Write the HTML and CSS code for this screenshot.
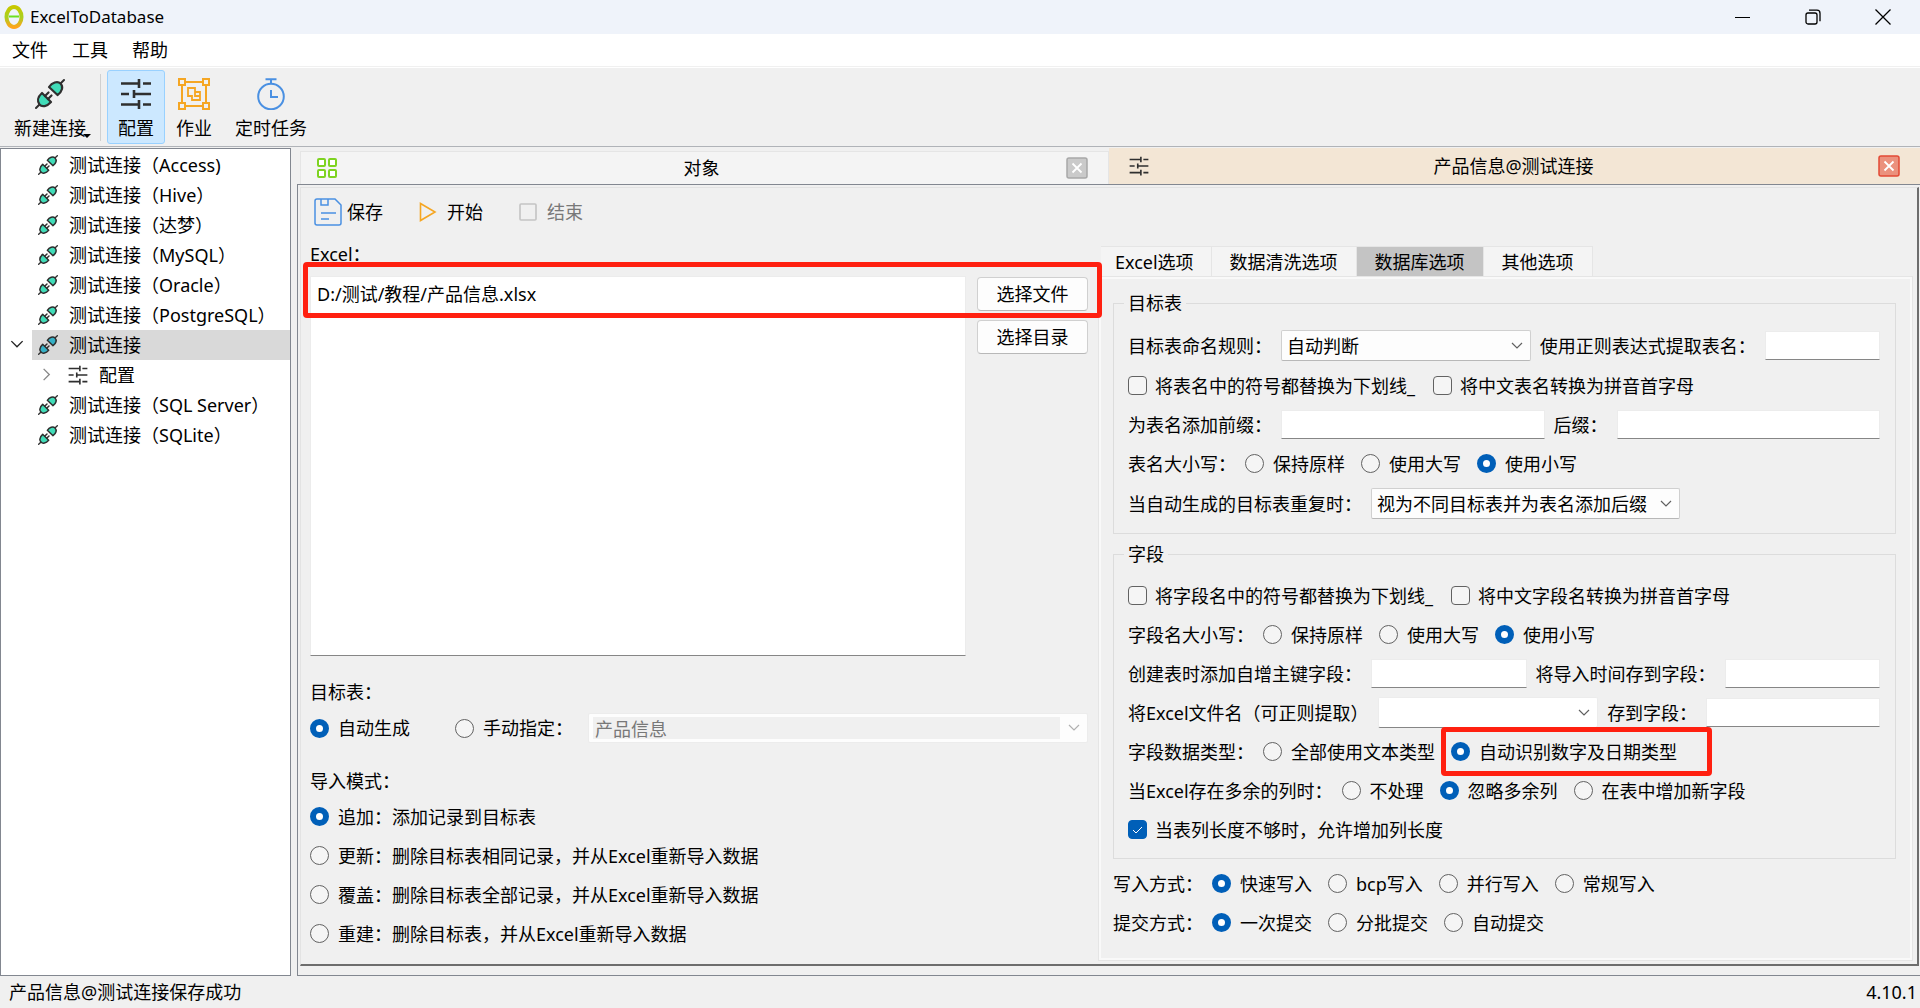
FILE: index.html
```html
<!DOCTYPE html>
<html lang="zh-CN">
<head>
<meta charset="utf-8">
<title>ExcelToDatabase</title>
<link rel="stylesheet" href="styles.css">
</head>
<body>
<svg class="sprite" aria-hidden="true">
  <symbol id="i-plug" viewBox="0 0 30 30">
    <path d="M29 1l-4 4M1 29l4-4" fill="none" stroke="#2f2f2f" stroke-width="2" stroke-linecap="round"/>
    <path d="M14 8C17 3.500 22.500 1.500 25.500 4.500S27.500 12.500 22.500 16Z" fill="currentColor" stroke="#2f2f2f" stroke-width="2.200" stroke-linejoin="round"/>
    <path d="M7 14L16 23C12 27.500 7 28.500 4.500 25.500S2.500 18 7 14Z" fill="currentColor" stroke="#2f2f2f" stroke-width="2.200" stroke-linejoin="round"/>
    <path d="M10 17l3.500-3.500M13 20l3.500-3.500" fill="none" stroke="#2f2f2f" stroke-width="2.200" stroke-linecap="round"/>
  </symbol>
  <symbol id="i-sliders" viewBox="0 0 32 32">
    <path d="M1 5.500h18M19 1v9M23 5.500h8M1 16h8M14 12v8M14 16h17M1 26.500h18M19 22v9M23 26.500h8" fill="none" stroke="#2f2f2f" stroke-width="2.600"/>
  </symbol>
  <symbol id="i-close" viewBox="0 0 22 22">
    <rect x="1" y="1" width="20" height="20" rx="2" fill="currentColor" fill-opacity=".55" stroke="currentColor" stroke-width="1.500"/>
    <path d="M6.500 6.500l9 9M15.500 6.500l-9 9" stroke="#fff" stroke-width="1.800"/>
  </symbol>
  <symbol id="i-chevron" viewBox="0 0 12 8"><path d="M1 1l5 5 5-5" fill="none" stroke="currentColor" stroke-width="1.200"/></symbol>
</svg>

<header class="titlebar">
  <svg class="logo" viewBox="0 0 20 26" aria-hidden="true">
    <defs><linearGradient id="lg" x1="0" y1="0" x2="0" y2="1"><stop offset="0" stop-color="#c8c800"/><stop offset=".5" stop-color="#a8d020"/><stop offset="1" stop-color="#ffa51c"/></linearGradient></defs>
    <ellipse cx="10" cy="13" rx="7.500" ry="10" fill="none" stroke="url(#lg)" stroke-width="4"/>
    <path d="M5 12.500h10" stroke="#6be020" stroke-width="2"/>
  </svg>
  <span class="app-name">ExcelToDatabase</span>
  <div class="window-buttons">
    <button aria-label="最小化"><svg viewBox="0 0 16 16"><path d="M0 8.500h15" stroke="#000"/></svg></button>
    <button aria-label="还原"><svg viewBox="0 0 16 16"><g fill="none" stroke="#000" stroke-width="1.300"><rect x="1" y="4" width="11" height="11" rx="2"/><path d="M4 1.200h8q3 0 3 3v8"/></g></svg></button>
    <button aria-label="关闭"><svg viewBox="0 0 16 16"><path d="M.5.5l15 15M15.500.5l-15 15" stroke="#000" stroke-width="1.300"/></svg></button>
  </div>
</header>

<nav class="menubar">
  <button>文件</button><button>工具</button><button>帮助</button>
</nav>

<div class="toolbar">
  <button class="tool"><svg class="tool-plug" aria-hidden="true"><use href="#i-plug"/></svg><span>新建连接</span><i class="drop"></i></button>
  <div class="separator"></div>
  <button class="tool active"><svg aria-hidden="true"><use href="#i-sliders"/></svg><span>配置</span></button>
  <button class="tool"><svg viewBox="0 0 32 32" fill="none" stroke="#f5a623" stroke-width="2" aria-hidden="true"><rect x="1" y="1" width="6" height="6"/><rect x="25" y="1" width="6" height="6"/><rect x="1" y="25" width="6" height="6"/><rect x="25" y="25" width="6" height="6"/><path d="M7 4h18M7 28h18M4 7v18M28 7v18"/><path d="M10 10h7v4h5v8h-8v-4h-4zM17 14v4h5" stroke-width="1.800"/></svg><span>作业</span></button>
  <button class="tool wide"><svg viewBox="0 0 32 32" fill="none" stroke="#4a90e2" stroke-width="2" aria-hidden="true"><circle cx="16" cy="18.500" r="12.800"/><path d="M10.500 1.200h11M16 1.200v4M16 12v7h7"/></svg><span>定时任务</span></button>
</div>

<main class="workspace">
  <aside class="tree">
    <ul>
      <li><svg><use href="#i-plug"/></svg>测试连接（Access)</li>
      <li><svg><use href="#i-plug"/></svg>测试连接（Hive）</li>
      <li><svg><use href="#i-plug"/></svg>测试连接（达梦）</li>
      <li><svg><use href="#i-plug"/></svg>测试连接（MySQL）</li>
      <li><svg><use href="#i-plug"/></svg>测试连接（Oracle）</li>
      <li><svg><use href="#i-plug"/></svg>测试连接（PostgreSQL）</li>
      <li class="selected"><svg class="arrow"><use href="#i-chevron"/></svg><svg><use href="#i-plug"/></svg>测试连接</li>
      <li class="child"><svg class="arrow closed"><use href="#i-chevron"/></svg><svg><use href="#i-sliders"/></svg>配置</li>
      <li><svg><use href="#i-plug"/></svg>测试连接（SQL Server）</li>
      <li><svg><use href="#i-plug"/></svg>测试连接（SQLite）</li>
    </ul>
  </aside>

  <section class="documents">
    <div class="doc-tabs">
      <div class="doc-tab">
        <svg viewBox="0 0 20 20" fill="#fff" stroke="#7ed321" stroke-width="2" aria-hidden="true"><rect x="1" y="1" width="7" height="7" rx="1"/><rect x="12" y="1" width="7" height="7" rx="1"/><rect x="1" y="12" width="7" height="7" rx="1"/><rect x="12" y="12" width="7" height="7" rx="1"/></svg>
        <span>对象</span>
        <button class="tab-close" aria-label="关闭"><svg><use href="#i-close"/></svg></button>
      </div>
      <div class="doc-tab current">
        <svg aria-hidden="true"><use href="#i-sliders"/></svg>
        <span>产品信息@测试连接</span>
        <button class="tab-close" aria-label="关闭"><svg><use href="#i-close"/></svg></button>
      </div>
    </div>

    <div class="doc-frame">
    <form class="doc">
      <div class="actions">
        <button type="button"><svg class="save" viewBox="0 0 28 28" fill="none" stroke="#4a90e2" stroke-width="1.500" aria-hidden="true"><path d="M3 1h18l6 6v18q0 2-2 2H3q-2 0-2-2V3q0-2 2-2zM7 1v6h7V1M7 15h15M7 21h8"/></svg>保存</button>
        <button type="button"><svg class="play" viewBox="0 0 18 20" fill="none" stroke="#f5a623" stroke-width="1.600" aria-hidden="true"><path d="M1.500 1.500L16 10 1.500 18.500z"/></svg>开始</button>
        <button type="button" disabled><svg class="stop" viewBox="0 0 18 18" fill="none" stroke="#c4c4c4" stroke-width="1.600" aria-hidden="true"><rect x="1" y="1" width="16" height="16" rx="1"/></svg>结束</button>
      </div>

      <div class="columns">
        <div class="source">
          <label class="caption" for="files">Excel：</label>
          <div class="file-area">
            <textarea id="files" spellcheck="false">D:/测试/教程/产品信息.xlsx</textarea>
            <div class="file-buttons">
              <button type="button" class="push">选择文件</button>
              <button type="button" class="push">选择目录</button>
            </div>
            <div class="mark mark-file"></div>
          </div>
          <div class="caption target-caption">目标表：</div>
          <div class="target-row">
            <label class="choice"><input type="radio" name="target" checked>自动生成</label>
            <label class="choice"><input type="radio" name="target">手动指定：</label>
            <div class="combo disabled"><select disabled aria-label="目标表"><option>产品信息</option></select><svg><use href="#i-chevron"/></svg></div>
          </div>
          <div class="caption mode-caption">导入模式：</div>
          <div class="rows">
            <div class="row"><label class="choice"><input type="radio" name="mode" checked>追加：添加记录到目标表</label></div>
            <div class="row"><label class="choice"><input type="radio" name="mode">更新：删除目标表相同记录，并从Excel重新导入数据</label></div>
            <div class="row"><label class="choice"><input type="radio" name="mode">覆盖：删除目标表全部记录，并从Excel重新导入数据</label></div>
            <div class="row"><label class="choice"><input type="radio" name="mode">重建：删除目标表，并从Excel重新导入数据</label></div>
          </div>
        </div>

        <div class="options">
          <div class="option-tabs">
            <button type="button">Excel选项</button><button type="button">数据清洗选项</button><button type="button" class="current">数据库选项</button><button type="button">其他选项</button>
          </div>
          <div class="pane">
            <fieldset class="rows">
              <legend>目标表</legend>
              <div class="row tall">
                <label for="rule">目标表命名规则：</label>
                <div class="combo grow-rule"><select id="rule"><option>自动判断</option></select><svg><use href="#i-chevron"/></svg></div>
                <label for="regex">使用正则表达式提取表名：</label>
                <input type="text" id="regex" class="grow-regex">
              </div>
              <div class="row">
                <label class="choice check"><input type="checkbox">将表名中的符号都替换为下划线_</label>
                <label class="choice check"><input type="checkbox">将中文表名转换为拼音首字母</label>
              </div>
              <div class="row">
                <label for="prefix">为表名添加前缀：</label><input type="text" id="prefix">
                <label for="suffix">后缀：</label><input type="text" id="suffix">
              </div>
              <div class="row">
                <span>表名大小写：</span>
                <label class="choice"><input type="radio" name="tcase">保持原样</label>
                <label class="choice"><input type="radio" name="tcase">使用大写</label>
                <label class="choice"><input type="radio" name="tcase" checked>使用小写</label>
              </div>
              <div class="row tall">
                <label for="dup">当自动生成的目标表重复时：</label>
                <div class="combo"><select id="dup"><option>视为不同目标表并为表名添加后缀</option></select><svg><use href="#i-chevron"/></svg></div>
              </div>
            </fieldset>

            <fieldset class="rows">
              <legend>字段</legend>
              <div class="row">
                <label class="choice check"><input type="checkbox">将字段名中的符号都替换为下划线_</label>
                <label class="choice check"><input type="checkbox">将中文字段名转换为拼音首字母</label>
              </div>
              <div class="row">
                <span>字段名大小写：</span>
                <label class="choice"><input type="radio" name="fcase">保持原样</label>
                <label class="choice"><input type="radio" name="fcase">使用大写</label>
                <label class="choice"><input type="radio" name="fcase" checked>使用小写</label>
              </div>
              <div class="row">
                <label for="pk">创建表时添加自增主键字段：</label><input type="text" id="pk">
                <label for="time">将导入时间存到字段：</label><input type="text" id="time">
              </div>
              <div class="row">
                <label for="fname">将Excel文件名（可正则提取）</label>
                <div class="combo editable grow-name"><select id="fname"><option></option></select><svg><use href="#i-chevron"/></svg></div>
                <label for="fcol">存到字段：</label><input type="text" id="fcol" class="grow-col">
              </div>
              <div class="row">
                <span>字段数据类型：</span>
                <label class="choice"><input type="radio" name="dtype">全部使用文本类型</label>
                <label class="choice marked"><input type="radio" name="dtype" checked>自动识别数字及日期类型<i class="mark mark-type"></i></label>
              </div>
              <div class="row">
                <span>当Excel存在多余的列时：</span>
                <label class="choice"><input type="radio" name="extra">不处理</label>
                <label class="choice"><input type="radio" name="extra" checked>忽略多余列</label>
                <label class="choice"><input type="radio" name="extra">在表中增加新字段</label>
              </div>
              <div class="row">
                <label class="choice check"><input type="checkbox" checked>当表列长度不够时，允许增加列长度</label>
              </div>
            </fieldset>

            <div class="rows">
              <div class="row">
                <span>写入方式：</span>
                <label class="choice"><input type="radio" name="write" checked>快速写入</label>
                <label class="choice"><input type="radio" name="write">bcp写入</label>
                <label class="choice"><input type="radio" name="write">并行写入</label>
                <label class="choice"><input type="radio" name="write">常规写入</label>
              </div>
              <div class="row">
                <span>提交方式：</span>
                <label class="choice"><input type="radio" name="commit" checked>一次提交</label>
                <label class="choice"><input type="radio" name="commit">分批提交</label>
                <label class="choice"><input type="radio" name="commit">自动提交</label>
              </div>
            </div>
          </div>
        </div>
      </div>
    </form>
    </div>
  </section>
</main>

<footer class="statusbar"><span>产品信息@测试连接保存成功</span><span>4.10.1</span></footer>
</body>
</html>
```

FILE: styles.css
```css
* { box-sizing: border-box; }

body {
  margin: 0;
  min-height: 100vh;
  display: flex;
  flex-direction: column;
  background: #f0f0f0;
  color: #000;
  font: 18px/24px "Noto Sans", "Noto Sans CJK SC", sans-serif;
  white-space: nowrap;
}

button, input, select, textarea {
  margin: 0;
  padding: 0;
  border: 0;
  border-radius: 0;
  background: none;
  color: inherit;
  font: inherit;
}

.sprite { position: absolute; width: 0; height: 0; }

/* Window chrome */
.titlebar { display: flex; align-items: center; height: 34px; padding-left: 4px; background: #eff3fa; }
.logo { width: 20px; height: 26px; }
.app-name { margin-left: 6px; font-size: 17px; }
.window-buttons { display: flex; margin: 0 2px 0 auto; }
.window-buttons button { width: 70px; height: 34px; display: grid; place-items: center; }
.window-buttons svg { width: 16px; height: 16px; }

.menubar { display: flex; height: 33px; background: #fff; border-bottom: 1px solid #f0f0f0; }
.menubar button { width: 60px; }

.toolbar { display: flex; height: 80px; padding: 2px 0 2px 4px; border-top: 1px solid #fff; border-bottom: 1px solid #b0b3b8; }
.tool { position: relative; display: flex; flex-direction: column; align-items: center; min-width: 58px; padding: 7px 0 0; border: 1px solid transparent; border-radius: 3px; }
.tool svg { width: 32px; height: 32px; margin-bottom: 6px; }
.tool .tool-plug { width: 30px; height: 32px; }
.tool:first-child { padding: 7px 11px 0 9px; }
.tool.wide { padding: 7px 11px 0; }
.tool.active { background: #cce8ff; border-color: #99d1ff; }
.drop { position: absolute; right: 6px; bottom: 5px; border: 4px solid transparent; border-top-color: #000; border-bottom: 0; }
.separator { width: 1px; margin: 4px 6px 3px 2px; background: #d0d0d0; }
.tool-plug, .tree svg { color: #40dcb8; }

/* Workspace */
.workspace { flex: 1; display: flex; gap: 6px; padding-top: 1px; }

.tree { flex: 0 0 291px; background: #fff; border: 1px solid #828790; }
.tree ul { margin: 0; padding: 1px 0; list-style: none; }
.tree li { position: relative; display: flex; align-items: center; gap: 11px; height: 30px; margin-left: 31px; padding: 0 0 1px 6px; }
.tree svg { width: 20px; height: 20px; }
.tree .selected { background: #d9d9d9; }
.tree .selected svg { color: #35b0c5; }
.tree .arrow { position: absolute; left: -22px; width: 14px; height: 9px; }
.tree .selected .arrow { color: #222; }
.tree .child { padding-left: 36px; }
.tree .child .arrow { left: 8px; color: #888; transform: rotate(-90deg); }

.documents { flex: 1; min-width: 0; display: flex; flex-direction: column; }
.doc-tabs { display: flex; align-items: flex-end; padding-left: 3px; }
.doc-tab { flex: 1; display: flex; align-items: center; height: 33px; padding: 0 20px 1px 16px; background: #f4f4f4; border: 1px solid #e5e5e5; border-bottom: 0; }
.doc-tab span { flex: 1; text-align: center; }
.doc-tab > svg { width: 20px; height: 20px; }
.doc-tab.current { height: 36px; padding: 0 20px 1px; background: #f3e6d5; border: 0; }
.tab-close { width: 22px; height: 22px; color: #a8a8a8; }
.current .tab-close { color: #e34a35; }
.tab-close svg { display: block; width: 22px; height: 22px; }

.doc-frame { flex: 1; display: flex; padding: 2px 1px 9px 2px; border: 1px solid #828790; border-right: 0; }
.doc { flex: 1; min-width: 0; display: flex; flex-direction: column; padding: 0 4px 3px 9px; border: 1px solid #e3e3e3; border-right: 2px solid #6d6d6d; border-bottom: 2px solid #6d6d6d; }

.actions { display: flex; gap: 36px; height: 54px; padding: 0 0 6px 4px; align-items: center; }
.actions button { display: flex; align-items: center; gap: 5px; }
.actions button:nth-child(n+2) { gap: 10px; }
.actions button:disabled { color: #787878; }
.save { width: 28px; height: 28px; }
.play { width: 18px; height: 20px; }
.stop { width: 18px; height: 18px; }

.columns { flex: 1; display: grid; grid-template-columns: minmax(0, 778fr) minmax(0, 815fr); gap: 10px; }

/* Shared form parts */
.rows { display: flex; flex-direction: column; gap: 8px; }
.row { display: flex; align-items: center; gap: 9px; height: 31px; }
.row.tall { height: 33px; }
.choice { display: flex; align-items: center; gap: 9px; padding-right: 7px; }
.choice.check { gap: 8px; padding-right: 9px; }

input[type="radio"], input[type="checkbox"] { appearance: none; flex: none; width: 19px; height: 19px; border: 1px solid #626262; background: #f5f5f5; }
input[type="radio"] { border-radius: 50%; }
input[type="radio"]:checked { border: 6px solid #005fb8; background: #fff; }
input[type="checkbox"] { border-radius: 4px; }
input[type="checkbox"]:checked {
  border-color: #005fb8;
  background: #005fb8 url("data:image/svg+xml,%3Csvg xmlns='http://www.w3.org/2000/svg' viewBox='0 0 17 17'%3E%3Cpath d='M4 9l3 3 6-6' fill='none' stroke='white'/%3E%3C/svg%3E");
}

input[type="text"] { flex: 1 1 0; min-width: 0; height: 29px; padding: 0 5px; background: #fff; border: 1px solid #ececec; border-bottom-color: #868686; }

.combo { position: relative; display: flex; align-items: center; height: 31px; background: #fdfdfd; border: 1px solid #d0d0d0; border-bottom-color: #b8b8b8; border-radius: 2px; }
.combo select { appearance: none; width: 100%; height: 100%; padding: 0 32px 0 5px; }
.combo svg { position: absolute; right: 7px; width: 12px; height: 8px; color: #606060; pointer-events: none; }
.combo.editable { background: #fff; border-color: #ececec; border-bottom-color: #868686; }
.combo.disabled { flex: 1; padding: 3px 27px 3px 4px; height: 30px; border-color: #ececec; color: #787878; }
.combo.disabled select { padding: 0 2px; background: #f0f0f0; opacity: 1; }
.combo.disabled svg { color: #b0b0b0; }

.push { width: 111px; height: 34px; background: #fdfdfd; border: 1px solid #d0d0d0; border-bottom-color: #b8b8b8; border-radius: 4px; }

.mark { position: absolute; border: 5px solid #ff2010; border-radius: 4px; pointer-events: none; }

/* Source column */
.source { display: flex; flex-direction: column; padding-bottom: 12px; }
.file-area { position: relative; flex: 1; display: flex; gap: 11px; margin-top: 10px; }
.file-area textarea { flex: 1; min-width: 0; resize: none; padding: 5px 6px; background: #fff; border: 1px solid #ececec; border-bottom-color: #868686; outline: 0; }
.file-buttons { display: flex; flex-direction: column; gap: 9px; padding-top: 1px; }
.mark-file { left: -7px; right: -14px; top: -14px; height: 56px; }
.target-caption { margin-top: 24px; }
.target-row { display: flex; align-items: center; margin-top: 9px; }
.target-row .choice { padding-right: 45px; }
.target-row .choice + .choice { padding-right: 15px; }
.mode-caption { margin: 26px 0 8px; }

/* Options column */
.options { display: flex; flex-direction: column; padding-top: 4px; }
.option-tabs { display: flex; padding-left: 3px; }
.option-tabs button { height: 30px; padding: 0 18px; background: #f4f4f4; border: 1px solid #e5e5e5; border-width: 1px 1px 0 0; }
.option-tabs button:first-child { padding: 0 17px 0 14px; }
.option-tabs .current { background: #c4c4c4; }
.pane { flex: 1; padding: 14px 16px 0 14px; border: 1px solid #e5e5e5; outline: 2px solid #f9f9f9; outline-offset: -3px; }
.pane > .rows:last-child { margin-top: 9px; }

fieldset { min-width: 0; margin: 0 0 8px; padding: 14px 15px 13px 14px; border: 1px solid #dcdcdc; }
legend { margin-left: -4px; padding: 0 4px; }
.grow-rule { flex: 247 1 0; }
input.grow-regex { flex: 103 1 0; }
.grow-name { flex: 216 1 0; }
input.grow-col { flex: 160 1 0; }
.marked { position: relative; }
.mark-type { left: -10px; right: -28px; top: -13px; height: 49px; }

.statusbar { display: flex; justify-content: space-between; align-items: center; height: 32px; padding: 0 3px 0 9px; }
```
